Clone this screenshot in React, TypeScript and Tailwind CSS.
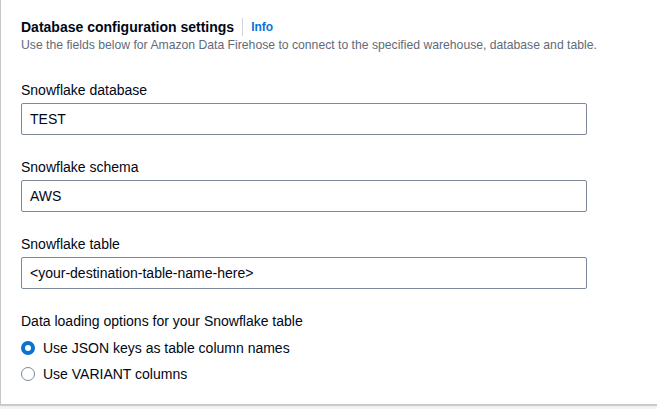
export default function App() {
  const fields = [
    { label: "Snowflake database", value: "TEST" },
    { label: "Snowflake schema", value: "AWS" },
    { label: "Snowflake table", value: "<your-destination-table-name-here>" },
  ];

  return (
    <main className="h-[409px] w-[657px] overflow-hidden bg-[#f2f3f3] font-['Liberation_Sans',Arial,sans-serif] text-[#000716]">
      <div className="h-[405px] border-l border-b border-[#c6c6cd] bg-white pl-[20px] pt-[17px] shadow-[0_1px_1px_rgba(0,7,22,0.15)]">
        <div className="flex items-center">
          <h2 className="text-[14px] font-bold leading-[20px]">
            Database configuration settings
          </h2>
          <span className="mx-[8px] h-[18px] w-px bg-[#d1d5db]" />
          <a className="text-[12px] font-bold leading-[20px] text-[#0972d3]">Info</a>
        </div>
        <p className="text-[12.2px] leading-[16px] text-[#5f6b7a]">
          Use the fields below for Amazon Data Firehose to connect to the specified warehouse,
          database and table.
        </p>

        <div className="mt-[27px] flex flex-col gap-[22px]">
          {fields.map((f) => (
            <div key={f.label}>
              <label className="block text-[14px] leading-[20px]">{f.label}</label>
              <div className="mt-[3px] flex h-[32px] w-[566px] items-center rounded-[2px] border border-[#7d8998] px-[8px] text-[14px]">
                {f.value}
              </div>
            </div>
          ))}

          <div>
            <div className="text-[14px] leading-[20px]">Data loading options for your Snowflake table</div>
            <div className="mt-[7px] flex items-center gap-[8px] text-[14px] leading-[20px]">
              <span className="h-[14px] w-[14px] rounded-full border-[4px] border-[#0972d3] bg-white" />
              Use JSON keys as table column names
            </div>
            <div className="mt-[6px] flex items-center gap-[8px] text-[14px] leading-[20px]">
              <span className="h-[14px] w-[14px] rounded-full border border-[#7d8998] bg-white" />
              Use VARIANT columns
            </div>
          </div>
        </div>
      </div>
    </main>
  );
}
